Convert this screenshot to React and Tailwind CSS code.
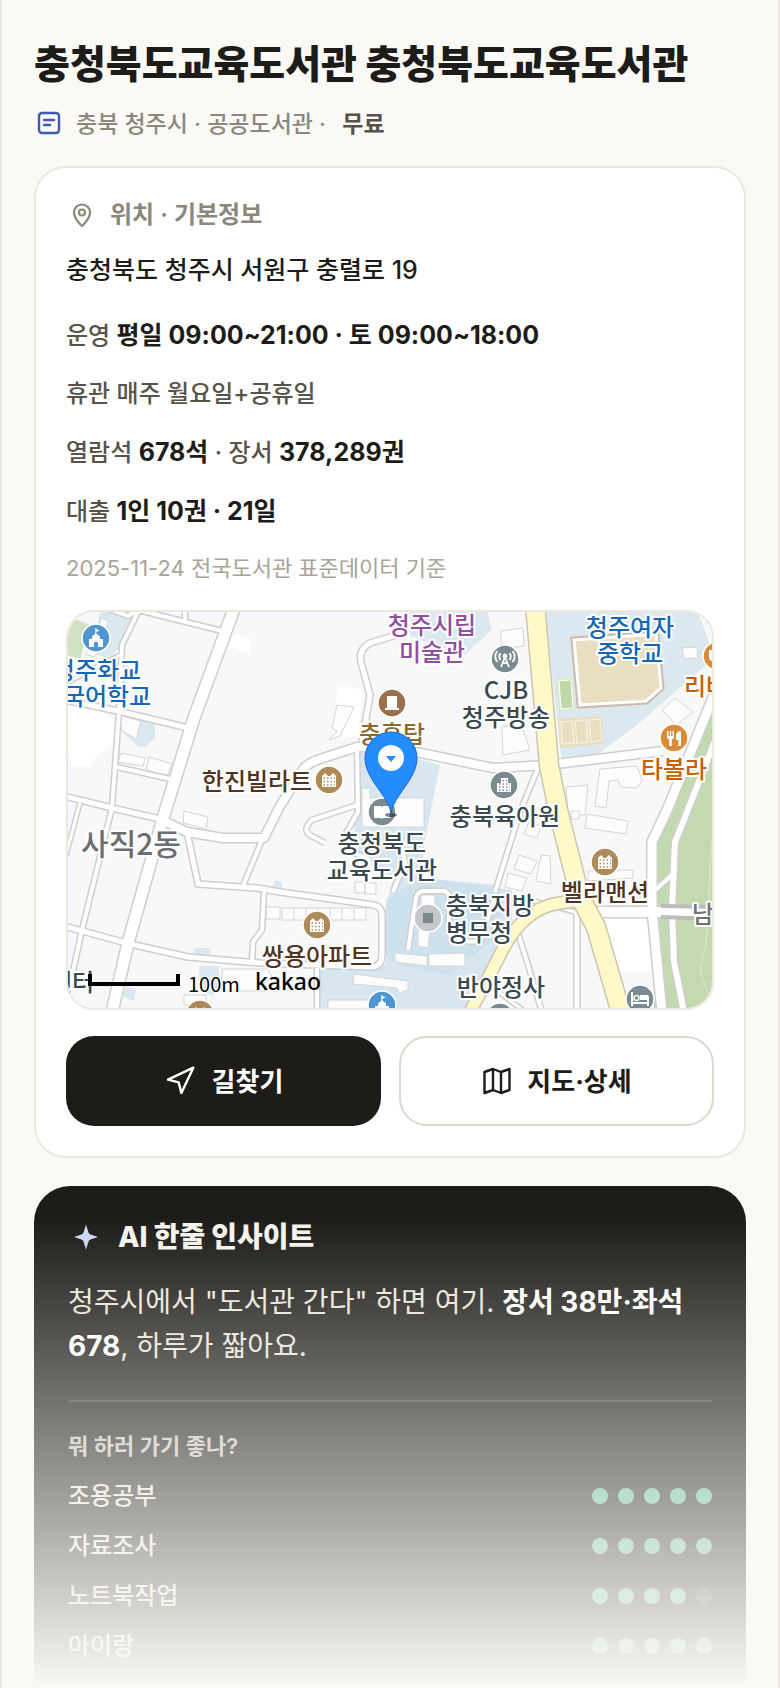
import { Navigation } from 'lucide-react';

const hours = [
    [{ text: '운영 ' }, { text: '평일 09:00~21:00 · 토 09:00~18:00', strong: true }],
    [{ text: '휴관 매주 월요일+공휴일' }],
    [{ text: '열람석 ' }, { text: '678석', strong: true }, { text: ' · 장서 ' }, { text: '378,289권', strong: true }],
    [{ text: '대출 ' }, { text: '1인 10권 · 21일', strong: true }],
];

const purposes = [
    { label: '조용공부', score: 5 },
    { label: '자료조사', score: 5 },
    { label: '노트북작업', score: 4 },
    { label: '아이랑', score: 5 },
];

// minor streets, d + inner width
const streets = [
    ['M104 607L128 616L138 610L222 631', 4],
    ['M185 608V622', 4],
    ['M138 612L122 645L119 712L112 808L82 930L70 985', 4],
    ['M68 682L120 655', 3],
    ['M60 699L118 711L188 728', 5],
    ['M117 767L170 779', 4],
    ['M60 795L112 808L160 819', 5],
    ['M80 803L66 855', 3],
    ['M187 832L198 884L257 888L280 892L374 905Q382 907 382 915V955Q382 966 372 967L260 963L188 957L130 944L60 925', 5],
    ['M262 840L243 886', 4],
    ['M264 892L262 930L253 942L252 962', 4],
    ['M357 748L358 812L345 835L348 850L370 860', 4],
    ['M362 742L370 695L361 662Q358 650 370 643L403 633', 5],
    ['M357 805L312 820Q302 830 310 835L325 843', 4],
    ['M393 892L405 862L402 848L385 843', 4],
    ['M408 950L416 898Q418 891 424 891H444Q449 892 449 898V930Q450 941 462 941L480 942L494 900', 4],
    ['M317 968V1012', 4],
    ['M577 910V1012', 5],
    ['M517 930L528 965L542 1012', 4],
    ['M490 985L525 1012', 3],
    ['M538 768L520 812L495 892', 4],
    ['M653 892L674 873', 4],
    ['M720 728L687 812L675 842L672 910L674 962L684 1012', 6],
    ['M530 900L575 912', 3],
];

const roads = [
    ['M235 606L194 718L164 815L128 943L112 1012', 11],
    ['M164 821L187 832L223 838L264 838L280 806L304 768Q310 762 320 759L357 747H392L493 768L548 765L663 751', 8],
    ['M716 690L668 808L652 842V910L662 1012', 9],
    ['M590 912L716 912', 10],
];

const buildings = [
    'M101 618l7 3-3 12-7-2zM90 648l8 4-4 5-9-3z',
    'M120 715l21 6-5 18-15-9z',
    'M121 753l24 5-2 8-25-4zM149 757l23 7-5 12-21-6z',
    'M337 705l17 2-14 29-11 4 8-9-5-3z',
    'M362 788h8v10h54v29h-62z',
    'M184 811l24 6-2 12-23-6z',
    'M222 969h46l4 9-7 2v11h-43zM184 995h22v10h-22z',
    'M282 908h84v12h-84zM294 908v12M306 908v12M318 908v12M330 908v12M342 908v12M354 908v12',
    'M266 907h14v12h-14zM355 882h10v11h-10zM365 883h11v11h-11z',
    'M354 974l54 7v9l-9 3-2-5-44-4zM328 1000h60v14h-60z',
    'M395 953l32 3v10l-32-4zM429 954l36-1v13h-36z',
    'M421 895h14v20h-14zM418 930h12l-2 18-10-2z',
    'M682 648l15-1 1 11-14 1z',
    'M675 698l18 14-17 13-14-15z',
    'M566 787l22-2-3 30h-17z',
    'M600 769l37-3 5 14-5 8-16-1-3-7-9 1-3 27-11-2z',
    'M502 726h20l8 24-27 5zM501 631l22-3 1 18-23 3z',
    'M587 814l41 7-2 13-41-6zM571 811h8v8h-8z',
    'M541 855l9 1 1 28-15-3zM519 855l18 6-6 13-17-5zM508 873l19 5-5 13-17-4zM529 822l12 4-4 12-13-4z',
    'M588 871l45-1v8l-45 3z',
];

const places = [
    { x: 96, y: 638, fill: '#4f95d1', kind: 'school' },
    { x: 392, y: 703, fill: '#9b6f4b', kind: 'tower' },
    { x: 505, y: 659, fill: '#7a8a90', kind: 'antenna' },
    { x: 329, y: 780, fill: '#ae8a58', kind: 'apartment' },
    { x: 382, y: 812, fill: '#7a8a90', kind: 'book' },
    { x: 504, y: 785, fill: '#7a8a90', kind: 'office' },
    { x: 674, y: 738, fill: '#d98c38', kind: 'food' },
    { x: 717, y: 656, fill: '#d98c38', kind: 'cup' },
    { x: 605, y: 862, fill: '#ae8a58', kind: 'apartment' },
    { x: 317, y: 925, fill: '#ae8a58', kind: 'apartment' },
    { x: 428, y: 918, fill: '#c5c7cb', kind: 'square' },
    { x: 382, y: 1005, fill: '#4f95d1', kind: 'school' },
    { x: 640, y: 999, fill: '#7a8a90', kind: 'bed' },
    { x: 200, y: 1014, fill: '#ae8a58', kind: 'apartment' },
    { x: 500, y: 1017, fill: '#7a8a90', kind: 'none' },
];

const labels = [
    { x: 97, y: 679, text: '청주화교', fill: '#1767b5' },
    { x: 96, y: 705, text: '중국어학교', fill: '#1767b5' },
    { x: 432, y: 634, text: '청주시립', fill: '#914f9f' },
    { x: 432, y: 661, text: '미술관', fill: '#914f9f' },
    { x: 392, y: 743, text: '충혼탑', fill: '#8a6a30' },
    { x: 506, y: 699, text: 'CJB', fill: '#3a484f' },
    { x: 506, y: 726, text: '청주방송', fill: '#3a484f' },
    { x: 630, y: 636, text: '청주여자', fill: '#1767b5' },
    { x: 630, y: 662, text: '중학교', fill: '#1767b5' },
    { x: 717, y: 695, text: '리버스', fill: '#c46200' },
    { x: 674, y: 778, text: '타볼라', fill: '#c46200' },
    { x: 257, y: 790, text: '한진빌라트', fill: '#4f3423' },
    { x: 505, y: 825, text: '충북육아원', fill: '#3a484f' },
    { x: 382, y: 852, text: '충청북도', fill: '#3a484f' },
    { x: 382, y: 879, text: '교육도서관', fill: '#3a484f' },
    { x: 605, y: 901, text: '벨라맨션', fill: '#4f3423' },
    { x: 490, y: 914, text: '충북지방', fill: '#3a484f' },
    { x: 479, y: 941, text: '병무청', fill: '#3a484f' },
    { x: 317, y: 965, text: '쌍용아파트', fill: '#4f3423' },
    { x: 501, y: 996, text: '반야정사', fill: '#3a484f' },
    { x: 72, y: 991, text: '센터', fill: '#3a484f' },
    { x: 703, y: 923, text: '남', fill: '#6f7173' },
];

const PlaceGlyph = ({ kind, fill }) => {
    switch (kind) {
        case 'school':
            return <path fill="#fff" d="M-.7-10H.3V-9L3.5-7.5L.3-6V-4.5L4-1.5V1H7V9H2V5.5Q2 3.5 0 3.5T-2 5.5V9H-7V1H-4V-1.5L-.7-4.5Z" />;
        case 'tower':
            return <path fill="#fff" d="M-5-7H5V5H7V7H-7V5H-5Z" />;
        case 'apartment':
            return (
                <>
                    <path fill="#fff" d="M-7-4L-4-7L-1-4H1L4-7L7-4V7H-7Z" />
                    <path stroke={fill} strokeWidth="1.5" strokeDasharray="1.5 2" d="M-5.5-2H6M-5.5 1.5H6M-5.5 5H6" />
                </>
            );
        case 'office':
            return (
                <>
                    <path fill="#fff" d="M-7-2H-3V-7H4V-2H7V7H-7Z" />
                    <path stroke={fill} strokeWidth="1.5" strokeDasharray="1.5 2" d="M-1.5-4.5H3M-5-1H6M-5 2H6M-5 5H6" />
                </>
            );
        case 'antenna':
            return (
                <g fill="none" stroke="#fff" strokeWidth="1.8">
                    <path d="M0-2L-4 8M0-2L4 8M-3 4H3M-4.5-6Q-7-2.5-4.5 1M4.5-6Q7-2.5 4.5 1M-7.5-8Q-12-2.5-7.5 3M7.5-8Q12-2.5 7.5 3" />
                    <circle cy="-3" r="1.5" fill="#fff" />
                </g>
            );
        case 'food':
            return (
                <path fill="#fff" d="M-7-7H-5.5V-2H-4.2V-7H-2.8V-2H-1.5V-7H0V-1Q0 1-2.2 1.5V8H-4.8V1.5Q-7 1-7-1ZM7-7V8H4.5V2H2V-3Q3-7 7-7Z" />
            );
        case 'book':
            return <path fill="#fff" d="M-8-6H-1L0-5L1-6H8V6H1L0 7L-1 6H-8Z" />;
        case 'bed':
            return (
                <>
                    <path fill="#fff" d="M-9-7H-7V3H7V-1H9V7H7V5H-7V7H-9ZM0-4H7Q9-4 9-2V1H0Z" />
                    <circle cx="-3.5" cy="-1" r="2.5" fill="none" stroke="#fff" strokeWidth="1.5" />
                </>
            );
        case 'cup':
            return <path fill="#fff" d="M-8-6H4V1Q4 5 0 5H-4Q-8 5-8 1Z" />;
        case 'square':
            return <rect x="-5" y="-5" width="10" height="10" fill="#7a8a90" />;
        default:
            return null;
    }
}

const LibraryMap = () => (
    <svg viewBox="68 612 644 396" className="block w-full" role="img" aria-label="충청북도교육도서관 지도">
        <rect x="68" y="612" width="644" height="396" fill="#f8f8f8" />

        <path fill="#fff" d="M338 685L363 690L358 735L332 740ZM68 705L100 712L115 720L115 745L95 757L90 767L72 766L68 750ZM235 633L252 640L248 655L228 646ZM602 915L655 915L650 972L618 972Z" />
        <path fill="#cfe2c3" d="M68 617L90 625L80 660L68 655Z" />
        <path fill="#dbe8f0" d="M100 612H138L122 645L110 658L97 655L94 640ZM143 720L155 723V738L145 747H139L121 731ZM410 612H487L492 629L465 655L410 636ZM545 612H698L712 650V660L638 724L594 757L562 762Z" />
        <path fill="#d7e6f0" d="M354 750H384L440 765L426 835L420 877L512 890L512 925L482 975L470 1008H320V970L386 965V905L393 880L372 862L355 850Z" />
        <path fill="#cbdfec" fillOpacity=".7" d="M386 900L420 878L500 885V935L450 975L400 965L386 955Z" />
        <path fill="#d9e8f1" d="M194 948H210V957H193ZM199 966H219V985L213 996L200 990ZM126 986L136 990L134 1001L123 997ZM275 880L282 882V888H272Z" />
        <path fill="#c3dab0" d="M716 700L668 822L654 846V1012H716Z" />
        <path fill="none" stroke="#d3e5c4" strokeWidth="1.5" d="M712 838L706 945L700 970L710 1000" />

        <path fill="#e9dec1" stroke="#cfb9ab" strokeWidth="7" d="M574 640L656 634L661 688L646 701L580 705Z" />
        <path fill="#e9dec1" stroke="#fff" strokeWidth="3" d="M574 640L656 634L661 688L646 701L580 705Z" />
        <path fill="#e9dec1" d="M558 719L602 716L604 744L560 748Z" />
        <path fill="none" stroke="#f5efdf" strokeWidth="1.5" d="M561 722L572 721L574 743L562 744ZM575 721L586 720L588 742L577 743ZM589 720L600 719L602 740L591 742Z" />
        <path fill="#d9ead0" d="M556 679L573 677L576 710L559 712Z" />
        <path fill="#bfd8aa" stroke="#fff" d="M559 681L571 680L573 708L561 709Z" />

        <g fill="#fcfcfd" stroke="#d5d5d7">
            {buildings.map(d => <path key={d} d={d} />)}
        </g>

        <g fill="none" strokeLinejoin="round">
            {streets.map(([d, w]) => <path key={d} d={d} stroke="#cecece" strokeWidth={w + 3} />)}
            {roads.map(([d, w]) => <path key={d} d={d} stroke="#cecece" strokeWidth={w + 3} />)}
            {streets.map(([d, w]) => <path key={d} d={d} stroke="#fff" strokeWidth={w} />)}
            {roads.map(([d, w]) => <path key={d} d={d} stroke="#fff" strokeWidth={w} />)}
            <path stroke="#bcbcbc" strokeWidth="4" d="M661 906L716 907M661 917L716 919" />
        </g>

        <g fill="none" strokeLinejoin="round">
            <path stroke="#cdc5ae" strokeWidth="14" d="M468 1016L500 955Q522 908 560 903L582 900" />
            <path stroke="#cdc5ae" strokeWidth="21" d="M535 604L549 765L558 810L580 897L596 927L622 1016" />
            <path stroke="#fff9c9" strokeWidth="11" d="M468 1016L500 955Q522 908 560 903L582 900" />
            <path stroke="#fff9c9" strokeWidth="18" d="M535 604L549 765L558 810L580 897L596 927L622 1016" />
        </g>

        {places.map(p => (
            <g key={`${p.x}-${p.y}`} transform={`translate(${p.x} ${p.y})`}>
                <circle r="14" fill={p.fill} stroke="#fff" strokeWidth="1.5" />
                <PlaceGlyph kind={p.kind} fill={p.fill} />
            </g>
        ))}

        <g className="font-['Noto_Sans_CJK_KR',sans-serif] font-medium" fontSize="24" textAnchor="middle" stroke="#fff" strokeWidth="4" strokeLinejoin="round" paintOrder="stroke">
            {labels.map(l => <text key={l.text} x={l.x} y={l.y} fill={l.fill}>{l.text}</text>)}
            <text x="131" y="855" fontSize="30" fill="#6b6d6f">사직2동</text>
        </g>

        <ellipse cx="391" cy="815" rx="6" ry="2" fill="#1b2b3f" fillOpacity=".6" />
        <path fill="#258dfb" stroke="#1668cf" d="M391 813C388 795 365 779 365 758A26 26 0 0 1 417 758C417 779 394 795 391 813Z" />
        <circle cx="391" cy="758" r="13" fill="#fff" />
        <path fill="#258dfb" d="M386 756H396L391 762Z" />

        <path fill="none" stroke="#000" strokeWidth="4" d="M90 974V984H178V974" />
        <text x="188" y="992" fontSize="20" className="font-['Noto_Sans_CJK_KR',sans-serif]" stroke="#fff" strokeWidth="2" paintOrder="stroke">100m</text>
        <text x="255" y="990" fontSize="23" className="font-['Noto_Sans',sans-serif] font-medium">kakao</text>
    </svg>
);

const ScoreDots = ({ score }) => (
    <div className="flex gap-2.5">
        {[1, 2, 3, 4, 5].map(n => (
            <span key={n} className={`size-4 rounded-full ${n <= score ? 'bg-[#60ba94]' : 'bg-white/15'}`}></span>
        ))}
    </div>
);

export default function App() {
    return (
        <div className="relative min-h-screen overflow-hidden border-x-2 border-[#ebe8e0] bg-[#faf9f5] px-8 font-[Inter,'Noto_Sans_CJK_KR',sans-serif] text-[#1e1c18]">
            <header className="pt-9">
                <h1 className="text-[39px] leading-14 font-extrabold">충청북도교육도서관 충청북도교육도서관</h1>
                <p className="mt-3 flex items-center gap-3 text-[23px] leading-10 font-medium text-[#8b877b]">
                    <svg viewBox="0 0 30 30" className="size-[30px]" fill="none" stroke="#3f5bb0" strokeWidth="2.4" strokeLinecap="round" strokeLinejoin="round">
                        <rect x="5" y="4" width="20" height="20" rx="3" />
                        <path d="M10 11H20M10 16H16" />
                    </svg>
                    <span>충북 청주시 · 공공도서관 · <b className="ml-2.5 font-semibold text-[#57534a]">무료</b></span>
                </p>
            </header>

            <section className="mt-[22px] rounded-[32px] border-2 border-[#ebe8e0] bg-white p-[30px]">
                <h2 className="flex h-[34px] items-center gap-3 text-2xl font-semibold text-[#8b877b]">
                    <svg viewBox="0 0 32 32" className="size-8" fill="none" stroke="currentColor" strokeWidth="2.2" strokeLinejoin="round">
                        <path d="M16 27C16 27 24 20 24 13.5A8 8 0 0 0 8 13.5C8 20 16 27 16 27Z" />
                        <circle cx="16" cy="13.5" r="3" />
                    </svg>
                    위치 · 기본정보
                </h2>
                <p className="mt-4 text-[25px] leading-11 font-medium">충청북도 청주시 서원구 충렬로 19</p>
                <div className="mt-[21px] flex flex-col gap-3.5 text-2xl leading-11 font-medium text-[#57534a]">
                    {hours.map((parts, idx) => (
                        <p key={idx}>
                            {parts.map(p => p.strong
                                ? <b key={p.text} className="text-[25px] font-bold text-[#1e1c18]">{p.text}</b>
                                : p.text)}
                        </p>
                    ))}
                </div>
                <p className="mt-3.5 text-[22px] leading-10 text-[#a8a498]">2025-11-24 전국도서관 표준데이터 기준</p>

                <div className="mt-[22px] overflow-hidden rounded-[28px] border-2 border-[#ebe8e0]">
                    <LibraryMap />
                </div>

                <div className="mt-[26px] grid grid-cols-2 gap-[18px] text-[26px] font-bold">
                    <button className="flex h-[90px] items-center justify-center gap-4 rounded-[28px] bg-[#1e1c18] text-white">
                        <Navigation className="size-8" strokeWidth={1.8} />
                        길찾기
                    </button>
                    <button className="flex h-[90px] items-center justify-center gap-3.5 rounded-[28px] border-2 border-[#dcd9cf] bg-white">
                        <svg viewBox="0 0 32 32" className="size-8" fill="none" stroke="currentColor" strokeWidth="2.4" strokeLinejoin="round">
                            <path d="M3.5 7L12 4L20 7L28.5 4V25L20 28L12 25L3.5 28ZM12 4V25M20 7V28" />
                        </svg>
                        지도·상세
                    </button>
                </div>
            </section>

            <section className="mt-7 rounded-t-[36px] bg-[#1e1c18] px-[34px] pt-[30px] pb-[17px] text-[#e8e5da]">
                <h2 className="flex h-[42px] items-center gap-4 text-[28px] font-extrabold text-[#f5f3ec]">
                    <svg viewBox="0 0 34 34" className="size-[34px]" fill="#ccd7f8">
                        <path d="M18 4.500L20.500 12.500Q21 14 22.500 14.500L30 17L22.500 19.500Q21 20 20.500 21.500L18 29.500L15.500 21.500Q15 20 13.500 19.500L6 17L13.500 14.500Q15 14 15.500 12.500Z" />
                    </svg>
                    AI 한줄 인사이트
                </h2>
                <p className="mt-[22px] text-[28px] leading-11">청주시에서 "도서관 간다" 하면 여기. <b className="font-bold text-white">장서 38만·좌석 678</b>, 하루가 짧아요.</p>
                <hr className="mt-8 border-t-2 border-white/15" />
                <h3 className="mt-7 text-[22px] leading-8 font-semibold text-[#c6c3b9]">뭐 하러 가기 좋나?</h3>
                <ul className="mt-[9px] text-2xl leading-[50px] font-medium">
                    {purposes.map(p => (
                        <li key={p.label} className="flex items-center justify-between">
                            {p.label}
                            <ScoreDots score={p.score} />
                        </li>
                    ))}
                </ul>
            </section>

            <div className="pointer-events-none absolute inset-x-0 bottom-0 h-[470px] bg-linear-to-b from-[#faf9f5]/0 to-[#faf9f5]"></div>
        </div>
    );
}
